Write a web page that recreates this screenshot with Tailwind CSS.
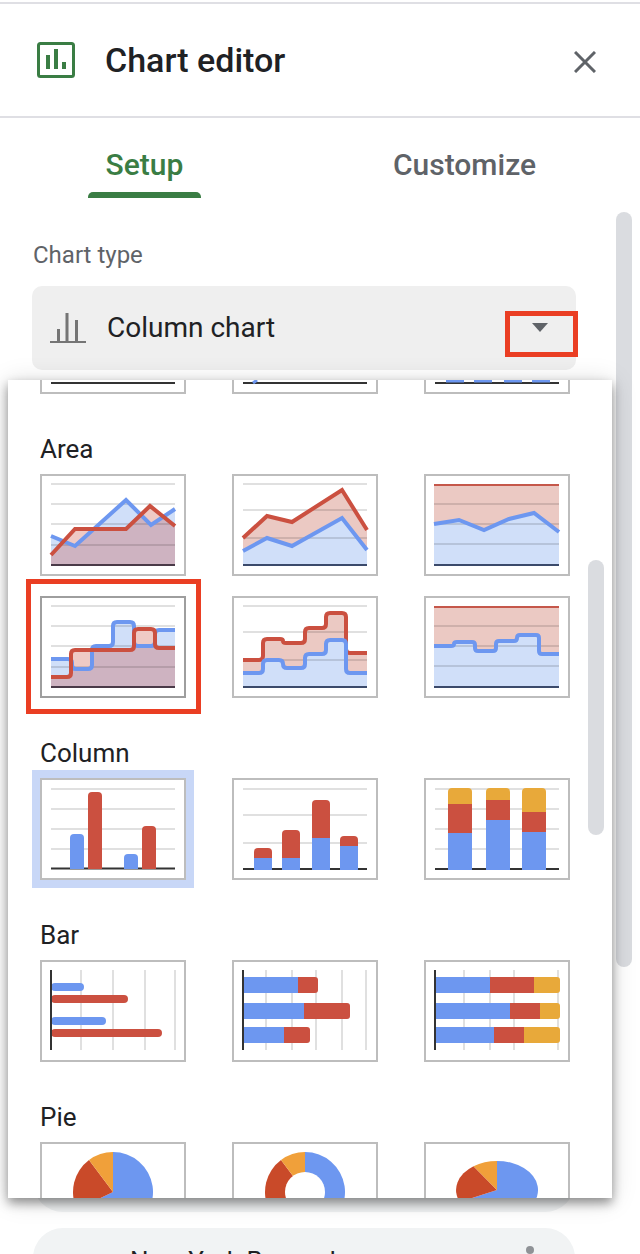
<!DOCTYPE html>
<html lang="en">
<head>
    <meta charset="UTF-8">
    <meta name="viewport" content="width=device-width, initial-scale=1.0">
    <title>Chart editor</title>
    <script src="https://cdn.jsdelivr.net/npm/@tailwindcss/browser@4"></script>
</head>
<body class="bg-white">
<div class="relative w-[640px] h-[1254px] overflow-hidden bg-white font-['Roboto',sans-serif]">

    <!-- Top rule -->
    <div class="h-[2px] mt-[2px] bg-[#dfdfe4]"></div>

    <!-- Header -->
    <header class="flex items-center h-[114px] border-b-2 border-[#dfdfe4] pl-[37px] pr-[44px] box-border">
        <svg class="w-[38px] h-[36px]" viewBox="0 0 38 36" fill="none">
            <rect x="1.5" y="1.5" width="35" height="33" rx="2" stroke="#3a7d44" stroke-width="3"/>
            <rect x="9" y="13" width="4" height="14" fill="#3a7d44"/>
            <rect x="17" y="7" width="4" height="20" fill="#3a7d44"/>
            <rect x="25" y="20" width="4" height="7" fill="#3a7d44"/>
        </svg>
        <h1 class="ml-[30px] text-[34px] leading-[40px] font-medium text-[#202124]">Chart editor</h1>
        <svg class="ml-auto mt-[4px] w-[22px] h-[22px]" viewBox="0 0 22 22" fill="none">
            <path d="M1 1 L21 21 M21 1 L1 21" stroke="#5f6368" stroke-width="3"/>
        </svg>
    </header>

    <!-- Tabs -->
    <div class="flex pl-[88px]">
        <div class="flex flex-col items-center w-[113px]">
            <div class="pt-[30px] pb-[10px] text-[30px] leading-[34px] font-medium text-[#3a7d44]">Setup</div>
            <div class="w-full h-[6px] rounded-t-[5px] bg-[#3a7d44]"></div>
        </div>
        <div class="ml-[192px] pt-[30px] text-[30px] leading-[34px] font-medium text-[#5f6368]">Customize</div>
    </div>

    <!-- Chart type -->
    <div class="pl-[33px] mt-[42px] text-[24px] leading-[30px] text-[#5f6368]">Chart type</div>
    <div class="relative flex items-center mt-[16px] ml-[32px] w-[544px] h-[84px] rounded-[10px] bg-[#efefef] pl-[18px]">
        <svg class="w-[36px] h-[30px]" viewBox="0 0 36 30" fill="#757575">
            <rect x="0" y="28" width="36" height="2"/>
            <rect x="7" y="16" width="3" height="12"/>
            <rect x="15.500" y="0" width="3" height="28"/>
            <rect x="25" y="7" width="3" height="21"/>
        </svg>
        <span class="ml-[21px] text-[28px] leading-[32px] text-[#202124]">Column chart</span>
        <svg class="absolute left-[500px] top-[37px] w-[16px] h-[9px]" viewBox="0 0 16 9" fill="#5f6368"><path d="M0 0 H16 L8 9 Z"/></svg>
        <div class="absolute -right-[2px] top-[25px] w-[73px] h-[46px] border-[5px] border-[#ea3e23]"></div>
    </div>

    <!-- Panels behind the popup -->
    <div class="ml-[33px] mt-[30px] w-[542px] h-[812px] rounded-b-[30px] bg-[#f1f3f4]"></div>
    <div class="relative ml-[33px] mt-[16px] w-[542px] h-[80px] rounded-t-[30px] bg-[#f1f3f4] pl-[97px] pt-[17px] text-[26px] leading-[32px] text-[#202124]">
        New York Boroughs
        <div class="absolute left-[493px] top-[18px] w-[8px] h-[8px] rounded-full bg-[#8f9296]"></div>
    </div>

    <!-- Outer scrollbar -->
    <div class="absolute left-[616px] top-[212px] w-[16px] h-[755px] rounded-full bg-[#dadce0]"></div>

    <!-- Chart type popup -->
    <div class="absolute left-[8px] top-[380px] w-[604px] h-[818px] overflow-hidden bg-white shadow-[0_5px_10px_rgba(0,0,0,0.4),0_2px_24px_rgba(0,0,0,0.15)]">
        <div class="absolute left-[580px] top-[180px] w-[16px] h-[275px] rounded-full bg-[#dadce0]"></div>

        <div class="pl-[32px]">
            <!-- Line (scrolled off) -->
            <div class="flex gap-[46px] h-[14px] items-end overflow-hidden">
                <svg class="w-[146px] h-[102px] shrink-0" viewBox="0 0 146 102">
                    <rect x="1" y="1" width="144" height="100" fill="#fff" stroke="#bdbdbd" stroke-width="2"/>
                    <path d="M11 91 H135" stroke="#333" stroke-width="2"/>
                </svg>
                <svg class="w-[146px] h-[102px] shrink-0" viewBox="0 0 146 102">
                    <rect x="1" y="1" width="144" height="100" fill="#fff" stroke="#bdbdbd" stroke-width="2"/>
                    <path d="M11 91 H135" stroke="#333" stroke-width="2"/>
                    <path d="M21 91 L25 88" stroke="#6d97f0" stroke-width="3"/>
                </svg>
                <svg class="w-[146px] h-[102px] shrink-0" viewBox="0 0 146 102">
                    <rect x="1" y="1" width="144" height="100" fill="#fff" stroke="#bdbdbd" stroke-width="2"/>
                    <path d="M11 91 H135" stroke="#333" stroke-width="2"/>
                    <path d="M22 89 H40 M50 89 H68 M80 89 H98 M108 89 H126" stroke="#6d97f0" stroke-width="3"/>
                </svg>
            </div>

            <!-- Area -->
            <div class="mt-[40px] mb-[10px] text-[26px] leading-[30px] text-[#202124]">Area</div>
            <div class="grid grid-cols-[146px_146px_146px] gap-x-[46px] gap-y-[20px]">
                <svg class="w-[146px] h-[102px]" viewBox="0 0 146 102" fill="none">
                    <rect x="1" y="1" width="144" height="100" fill="#fff" stroke="#bdbdbd" stroke-width="2"/>
                    <path d="M11 62 L35 72 L86 26 L111 51 L135 35 V91 H11 Z" fill="#d0dff9"/>
                    <path d="M11 81 L35 55 H86 L110 32 L135 52 V91 H11 Z" fill="#cb5040" fill-opacity="0.3"/>
                    <path d="M11 10 H135 M11 30 H135 M11 50 H135 M11 71 H135" stroke="#000" stroke-opacity="0.12" stroke-width="2"/>
                    <path d="M11 91 H135" stroke="#4a3a48" stroke-width="2"/>
                    <path d="M11 62 L35 72 L86 26 L111 51 L135 35" stroke="#6d97f0" stroke-width="4"/>
                    <path d="M11 81 L35 55 H86 L110 32 L135 52" stroke="#cb5040" stroke-width="4"/>
                </svg>
                <svg class="w-[146px] h-[102px]" viewBox="0 0 146 102" fill="none">
                    <rect x="1" y="1" width="144" height="100" fill="#fff" stroke="#bdbdbd" stroke-width="2"/>
                    <path d="M11 64 L35 42 L60 48 L110 16 L135 56 V91 H11 Z" fill="#ebc9c3"/>
                    <path d="M11 77 L35 64 L60 72 L110 44 L135 76 V91 H11 Z" fill="#d0dff9"/>
                    <path d="M11 10 H135 M11 36 H135 M11 64 H135" stroke="#000" stroke-opacity="0.12" stroke-width="2"/>
                    <path d="M11 91 H135" stroke="#3b4a6b" stroke-width="2"/>
                    <path d="M11 77 L35 64 L60 72 L110 44 L135 76" stroke="#6d97f0" stroke-width="4"/>
                    <path d="M11 64 L35 42 L60 48 L110 16 L135 56" stroke="#cb5040" stroke-width="4"/>
                </svg>
                <svg class="w-[146px] h-[102px]" viewBox="0 0 146 102" fill="none">
                    <rect x="1" y="1" width="144" height="100" fill="#fff" stroke="#bdbdbd" stroke-width="2"/>
                    <rect x="10" y="11" width="125" height="80" fill="#ebc9c3"/>
                    <path d="M10 50 L35 46 L60 56 L85 45 L110 39 L135 58 V91 H10 Z" fill="#d0dff9"/>
                    <path d="M10 30 H135 M10 50 H135 M10 70 H135" stroke="#000" stroke-opacity="0.12" stroke-width="2"/>
                    <path d="M10 11 H135" stroke="#c5574a" stroke-width="2"/>
                    <path d="M10 91 H135" stroke="#3b4a6b" stroke-width="2"/>
                    <path d="M10 50 L35 46 L60 56 L85 45 L110 39 L135 58" stroke="#6d97f0" stroke-width="4"/>
                </svg>

                <div class="relative w-[146px] h-[102px]">
                    <svg class="w-[146px] h-[102px]" viewBox="0 0 146 102" fill="none">
                        <rect x="1" y="1" width="144" height="100" fill="#fff" stroke="#9e9e9e" stroke-width="2"/>
                        <path d="M11 63 H28 Q32 63 32 67 V69 Q32 73 36 73 H48 Q52 73 52 69 V54 Q52 50 56 50 H69 Q73 50 73 46 V30 Q73 26 77 26 H90 Q94 26 94 30 V46 Q94 50 98 50 H111 Q115 50 115 46 V38 Q115 34 119 34 H135 V91 H11 Z" fill="#d0dff9"/>
                        <path d="M11 81 H27 Q31 81 31 77 V58 Q31 54 35 54 H90 Q94 54 94 50 V37 Q94 33 98 33 H111 Q115 33 115 37 V48 Q115 52 119 52 H135 V91 H11 Z" fill="#cb5040" fill-opacity="0.3"/>
                        <path d="M11 10 H135 M11 30 H135 M11 50 H135 M11 71 H135" stroke="#000" stroke-opacity="0.12" stroke-width="2"/>
                        <path d="M11 91 H135" stroke="#4a3a48" stroke-width="2"/>
                        <path d="M11 63 H28 Q32 63 32 67 V69 Q32 73 36 73 H48 Q52 73 52 69 V54 Q52 50 56 50 H69 Q73 50 73 46 V30 Q73 26 77 26 H90 Q94 26 94 30 V46 Q94 50 98 50 H111 Q115 50 115 46 V38 Q115 34 119 34 H135" stroke="#6d97f0" stroke-width="4"/>
                        <path d="M11 81 H27 Q31 81 31 77 V58 Q31 54 35 54 H90 Q94 54 94 50 V37 Q94 33 98 33 H111 Q115 33 115 37 V48 Q115 52 119 52 H135" stroke="#cb5040" stroke-width="4"/>
                    </svg>
                    <div class="absolute -left-[14px] -right-[15px] -top-[17px] -bottom-[16px] border-[5px] border-[#ea3e23]"></div>
                </div>
                <svg class="w-[146px] h-[102px]" viewBox="0 0 146 102" fill="none">
                    <rect x="1" y="1" width="144" height="100" fill="#fff" stroke="#bdbdbd" stroke-width="2"/>
                    <path d="M11 64 H27 Q31 64 31 60 V47 Q31 43 35 43 H48 Q51 43 51 45 Q51 47 54 47 H69 Q73 47 73 43 V36 Q73 32 77 32 H90 Q94 32 94 28 V21 Q94 17 98 17 H110 Q114 17 114 21 V53 Q114 57 118 57 H135 V91 H11 Z" fill="#ebc9c3"/>
                    <path d="M11 77 H27 Q31 77 31 73 V68 Q31 64 35 64 H47 Q51 64 51 68 Q51 72 55 72 H69 Q73 72 73 68 V62 Q73 58 77 58 H90 Q94 58 94 54 V48 Q94 44 98 44 H110 Q114 44 114 48 V73 Q114 77 118 77 H135 V91 H11 Z" fill="#d0dff9"/>
                    <path d="M11 10 H135 M11 36 H135 M11 64 H135" stroke="#000" stroke-opacity="0.12" stroke-width="2"/>
                    <path d="M11 91 H135" stroke="#3b4a6b" stroke-width="2"/>
                    <path d="M11 64 H27 Q31 64 31 60 V47 Q31 43 35 43 H48 Q51 43 51 45 Q51 47 54 47 H69 Q73 47 73 43 V36 Q73 32 77 32 H90 Q94 32 94 28 V21 Q94 17 98 17 H110 Q114 17 114 21 V53 Q114 57 118 57 H135" stroke="#cb5040" stroke-width="4"/>
                    <path d="M11 77 H27 Q31 77 31 73 V68 Q31 64 35 64 H47 Q51 64 51 68 Q51 72 55 72 H69 Q73 72 73 68 V62 Q73 58 77 58 H90 Q94 58 94 54 V48 Q94 44 98 44 H110 Q114 44 114 48 V73 Q114 77 118 77 H135" stroke="#6d97f0" stroke-width="4"/>
                </svg>
                <svg class="w-[146px] h-[102px]" viewBox="0 0 146 102" fill="none">
                    <rect x="1" y="1" width="144" height="100" fill="#fff" stroke="#bdbdbd" stroke-width="2"/>
                    <rect x="10" y="11" width="125" height="80" fill="#ebc9c3"/>
                    <path d="M10 50 H27 Q30 50 30 48 Q30 46 33 46 H48 Q51 46 51 49 V52 Q51 55 54 55 H69 Q72 55 72 52 V48 Q72 45 75 45 H90 Q93 45 93 42 Q93 39 96 39 H112 Q115 39 115 42 V55 Q115 58 118 58 H135 V91 H10 Z" fill="#d0dff9"/>
                    <path d="M10 30 H135 M10 50 H135 M10 70 H135" stroke="#000" stroke-opacity="0.12" stroke-width="2"/>
                    <path d="M10 11 H135" stroke="#c5574a" stroke-width="2"/>
                    <path d="M10 91 H135" stroke="#3b4a6b" stroke-width="2"/>
                    <path d="M10 50 H27 Q30 50 30 48 Q30 46 33 46 H48 Q51 46 51 49 V52 Q51 55 54 55 H69 Q72 55 72 52 V48 Q72 45 75 45 H90 Q93 45 93 42 Q93 39 96 39 H112 Q115 39 115 42 V55 Q115 58 118 58 H135" stroke="#6d97f0" stroke-width="4"/>
                </svg>
            </div>

            <!-- Column -->
            <div class="mt-[40px] mb-[10px] text-[26px] leading-[30px] text-[#202124]">Column</div>
            <div class="grid grid-cols-[146px_146px_146px] gap-x-[46px]">
                <svg class="w-[146px] h-[102px] outline-8 outline-[#c8d7f7]" viewBox="0 0 146 102" fill="none">
                    <rect x="1" y="1" width="144" height="100" fill="#fff" stroke="#bdbdbd" stroke-width="2"/>
                    <path d="M11 11 H135 M11 31 H135 M11 51 H135 M11 71 H135" stroke="#e0e0e0" stroke-width="2"/>
                    <path d="M11 90.500 H135" stroke="#333" stroke-width="2"/>
                    <path d="M30 91 V60 Q30 56 34 56 H40 Q44 56 44 60 V91 Z" fill="#6d97f0"/>
                    <path d="M48 91 V18 Q48 14 52 14 H58 Q62 14 62 18 V91 Z" fill="#cb5040"/>
                    <path d="M84 91 V80 Q84 76 88 76 H94 Q98 76 98 80 V91 Z" fill="#6d97f0"/>
                    <path d="M102 91 V52 Q102 48 106 48 H112 Q116 48 116 52 V91 Z" fill="#cb5040"/>
                </svg>
                <svg class="w-[146px] h-[102px]" viewBox="0 0 146 102" fill="none">
                    <rect x="1" y="1" width="144" height="100" fill="#fff" stroke="#bdbdbd" stroke-width="2"/>
                    <path d="M11 11 H135 M11 37 H135 M11 65 H135" stroke="#e0e0e0" stroke-width="2"/>
                    <path d="M11 91 H135" stroke="#333" stroke-width="2"/>
                    <path d="M22 80 V74 Q22 70 26 70 H36 Q40 70 40 74 V80 Z" fill="#cb5040"/>
                    <rect x="22" y="80" width="18" height="12" fill="#6d97f0"/>
                    <path d="M50 80 V56 Q50 52 54 52 H64 Q68 52 68 56 V80 Z" fill="#cb5040"/>
                    <rect x="50" y="80" width="18" height="12" fill="#6d97f0"/>
                    <path d="M80 60 V26 Q80 22 84 22 H94 Q98 22 98 26 V60 Z" fill="#cb5040"/>
                    <rect x="80" y="60" width="18" height="32" fill="#6d97f0"/>
                    <path d="M108 68 V62 Q108 58 112 58 H122 Q126 58 126 62 V68 Z" fill="#cb5040"/>
                    <rect x="108" y="68" width="18" height="24" fill="#6d97f0"/>
                </svg>
                <svg class="w-[146px] h-[102px]" viewBox="0 0 146 102" fill="none">
                    <rect x="1" y="1" width="144" height="100" fill="#fff" stroke="#bdbdbd" stroke-width="2"/>
                    <path d="M11 11 H135 M11 31 H135 M11 51 H135 M11 71 H135" stroke="#e0e0e0" stroke-width="2"/>
                    <path d="M11 91 H135" stroke="#333" stroke-width="2"/>
                    <path d="M24 26 V14 Q24 10 28 10 H44 Q48 10 48 14 V26 Z" fill="#e8a93a"/>
                    <rect x="24" y="26" width="24" height="29" fill="#cb5040"/>
                    <rect x="24" y="55" width="24" height="37" fill="#6d97f0"/>
                    <path d="M62 22 V14 Q62 10 66 10 H82 Q86 10 86 14 V22 Z" fill="#e8a93a"/>
                    <rect x="62" y="22" width="24" height="20" fill="#cb5040"/>
                    <rect x="62" y="42" width="24" height="50" fill="#6d97f0"/>
                    <path d="M98 34 V14 Q98 10 102 10 H118 Q122 10 122 14 V34 Z" fill="#e8a93a"/>
                    <rect x="98" y="34" width="24" height="20" fill="#cb5040"/>
                    <rect x="98" y="54" width="24" height="38" fill="#6d97f0"/>
                </svg>
            </div>

            <!-- Bar -->
            <div class="mt-[40px] mb-[10px] text-[26px] leading-[30px] text-[#202124]">Bar</div>
            <div class="grid grid-cols-[146px_146px_146px] gap-x-[46px]">
                <svg class="w-[146px] h-[102px]" viewBox="0 0 146 102" fill="none">
                    <rect x="1" y="1" width="144" height="100" fill="#fff" stroke="#bdbdbd" stroke-width="2"/>
                    <path d="M41 10 V90 M73 10 V90 M105 10 V90 M135 10 V90" stroke="#e0e0e0" stroke-width="2"/>
                    <rect x="11" y="23" width="33" height="8" rx="4" fill="#6d97f0"/>
                    <rect x="11" y="35" width="77" height="8" rx="4" fill="#cb5040"/>
                    <rect x="11" y="57" width="55" height="8" rx="4" fill="#6d97f0"/>
                    <rect x="11" y="69" width="111" height="8" rx="4" fill="#cb5040"/>
                    <path d="M11 10 V90" stroke="#333" stroke-width="2"/>
                </svg>
                <svg class="w-[146px] h-[102px]" viewBox="0 0 146 102" fill="none">
                    <rect x="1" y="1" width="144" height="100" fill="#fff" stroke="#bdbdbd" stroke-width="2"/>
                    <path d="M34 10 V90 M60 10 V90 M84 10 V90 M110 10 V90 M134 10 V90" stroke="#e0e0e0" stroke-width="2"/>
                    <rect x="11" y="17" width="55" height="16" fill="#6d97f0"/>
                    <path d="M66 17 H83 Q86 17 86 20 V30 Q86 33 83 33 H66 Z" fill="#cb5040"/>
                    <rect x="11" y="43" width="61" height="16" fill="#6d97f0"/>
                    <path d="M72 43 H115 Q118 43 118 46 V56 Q118 59 115 59 H72 Z" fill="#cb5040"/>
                    <rect x="11" y="67" width="41" height="16" fill="#6d97f0"/>
                    <path d="M52 67 H75 Q78 67 78 70 V80 Q78 83 75 83 H52 Z" fill="#cb5040"/>
                    <path d="M11 10 V90" stroke="#333" stroke-width="2"/>
                </svg>
                <svg class="w-[146px] h-[102px]" viewBox="0 0 146 102" fill="none">
                    <rect x="1" y="1" width="144" height="100" fill="#fff" stroke="#bdbdbd" stroke-width="2"/>
                    <path d="M40 10 V90 M66 10 V90 M90 10 V90 M134 10 V90" stroke="#e0e0e0" stroke-width="2"/>
                    <rect x="11" y="17" width="55" height="16" fill="#6d97f0"/>
                    <rect x="66" y="17" width="44" height="16" fill="#cb5040"/>
                    <path d="M110 17 H133 Q136 17 136 20 V30 Q136 33 133 33 H110 Z" fill="#e8a93a"/>
                    <rect x="11" y="43" width="75" height="16" fill="#6d97f0"/>
                    <rect x="86" y="43" width="30" height="16" fill="#cb5040"/>
                    <path d="M116 43 H133 Q136 43 136 46 V56 Q136 59 133 59 H116 Z" fill="#e8a93a"/>
                    <rect x="11" y="67" width="59" height="16" fill="#6d97f0"/>
                    <rect x="70" y="67" width="30" height="16" fill="#cb5040"/>
                    <path d="M100 67 H133 Q136 67 136 70 V80 Q136 83 133 83 H100 Z" fill="#e8a93a"/>
                    <path d="M11 10 V90" stroke="#333" stroke-width="2"/>
                </svg>
            </div>

            <!-- Pie -->
            <div class="mt-[40px] mb-[10px] text-[26px] leading-[30px] text-[#202124]">Pie</div>
            <div class="grid grid-cols-[146px_146px_146px] gap-x-[46px]">
                <svg class="w-[146px] h-[102px]" viewBox="0 0 146 102" fill="none">
                    <rect x="1" y="1" width="144" height="100" fill="#fff" stroke="#bdbdbd" stroke-width="2"/>
                    <path d="M73 50 V10 A40 40 0 1 1 37 67.400 Z" fill="#6d97f0"/>
                    <path d="M73 50 L37 67.400 A40 40 0 0 1 49 18 Z" fill="#c94a29"/>
                    <path d="M73 50 L49 18 A40 40 0 0 1 73 10 Z" fill="#f0a03a"/>
                </svg>
                <svg class="w-[146px] h-[102px]" viewBox="0 0 146 102" fill="none">
                    <rect x="1" y="1" width="144" height="100" fill="#fff" stroke="#bdbdbd" stroke-width="2"/>
                    <path d="M73 50 V10 A40 40 0 1 1 37 67.400 Z" fill="#6d97f0"/>
                    <path d="M73 50 L37 67.400 A40 40 0 0 1 49 18 Z" fill="#c94a29"/>
                    <path d="M73 50 L49 18 A40 40 0 0 1 73 10 Z" fill="#f0a03a"/>
                    <circle cx="73" cy="50" r="20" fill="#fff"/>
                </svg>
                <svg class="w-[146px] h-[102px]" viewBox="0 0 146 102" fill="none">
                    <rect x="1" y="1" width="144" height="100" fill="#fff" stroke="#bdbdbd" stroke-width="2"/>
                    <path d="M73 48 V19 A41 29 0 1 1 35.700 60 Z" fill="#6d97f0"/>
                    <path d="M73 48 L35.700 60 A41 29 0 0 1 49.500 24.300 Z" fill="#c94a29"/>
                    <path d="M73 48 L49.500 24.300 A41 29 0 0 1 73 19 Z" fill="#f0a03a"/>
                </svg>
            </div>
        </div>
    </div>
</div>
</body>
</html>
